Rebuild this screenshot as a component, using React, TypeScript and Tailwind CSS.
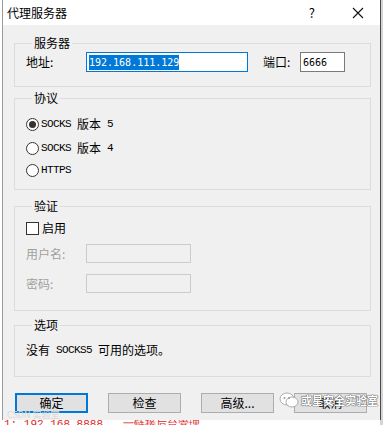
import React from "react";

const ui = "font-['Noto_Sans_CJK_SC','Microsoft_YaHei',sans-serif]";
const mono = "font-['Liberation_Mono',monospace] text-[11px] tracking-[-0.6px]";
const digits = "font-['DejaVu_Sans_Mono',monospace]";

function Radio({ checked, children }: { checked?: boolean; children: React.ReactNode }) {
  return (
    <div className="flex h-[20px] items-center">
      <div className="flex h-[13px] w-[13px] items-center justify-center rounded-full border border-[#333333] bg-white">
        {checked && <div className="h-[7px] w-[7px] rounded-full bg-[#333333]" />}
      </div>
      <div className="ml-[2px] flex items-center text-[#000000]">{children}</div>
    </div>
  );
}

function Group({ title, className, children }: { title: string; className: string; children: React.ReactNode }) {
  return (
    <fieldset className={`ml-[11px] w-[357px] border border-[#dcdcdc] pl-[11px] ${className}`}>
      <legend className={`ml-[6px] px-[2px] text-[12px] leading-[16px] text-black ${ui}`}>{title}</legend>
      {children}
    </fieldset>
  );
}

export default function App() {
  return (
    <div className={`relative h-[425px] w-[383px] overflow-hidden bg-white ${ui}`}>
      {/* what is behind the dialog */}
      <div className="absolute right-0 top-0 h-full w-[3px] bg-[#d4d4d4]" />
      <div className="absolute left-[4px] top-[418px] font-['Liberation_Mono',monospace] text-[11px] leading-[12px] text-[#d22]">
        1: 192.168.8888 &nbsp; 一链接后台管理
      </div>

      <div className="relative ml-[2px] flex h-[420px] w-[379px] flex-col border-l border-r border-l-[#9a9a9a] border-r-[#4a4a4a] bg-[#f0f0f0]">
        {/* title bar */}
        <div className="flex h-[25px] shrink-0 items-center bg-white">
          <span className="ml-[4px] text-[12px] text-black">代理服务器</span>
          <span className="ml-auto mr-[37px] text-[13px] text-black">?</span>
          <svg width="12" height="12" viewBox="0 0 12 12" className="mr-[16px]">
            <path d="M1 1 L11 11 M11 1 L1 11" stroke="#111" strokeWidth="1.1" />
          </svg>
        </div>

        <Group title="服务器" className="mt-[10px] h-[52px]">
          <div className="mt-[1px] flex h-[20px] items-center">
            <span className="w-[60px] text-[12px] text-black">地址:</span>
            <div className="flex h-[20px] w-[162px] items-center border border-[#0078d7] bg-white pl-[2px]">
              <span className={`bg-[#0078d7] text-[10px] leading-[15px] text-white ${digits}`}>192.168.111.129</span>
            </div>
            <span className="ml-[15px] w-[37px] text-[12px] text-black">端口:</span>
            <div className="flex h-[20px] w-[45px] items-center border border-[#7a7a7a] bg-white pl-[2px]">
              <span className={`text-[10px] text-black ${digits}`}>6666</span>
            </div>
          </div>
        </Group>

        <Group title="协议" className="mt-[3px] h-[100px]">
          <div className="mt-[8px]">
            <Radio checked>
              <span className={mono}>SOCKS&nbsp;</span>
              <span className="text-[12px]">版本</span>
              <span className={mono}>&nbsp;5</span>
            </Radio>
          </div>
          <div className="mt-[4px]">
            <Radio>
              <span className={mono}>SOCKS&nbsp;</span>
              <span className="text-[12px]">版本</span>
              <span className={mono}>&nbsp;4</span>
            </Radio>
          </div>
          <div className="mt-[2px]">
            <Radio>
              <span className={mono}>HTTPS</span>
            </Radio>
          </div>
        </Group>

        <Group title="验证" className="mt-[8px] h-[113px]">
          <div className="mt-[4px] flex h-[20px] items-center">
            <div className="h-[13px] w-[13px] border border-[#333333] bg-white" />
            <span className="ml-[3px] text-[12px] text-black">启用</span>
          </div>
          <div className="mt-[6px] flex h-[19px] items-center">
            <span className="w-[60px] text-[12px] text-[#a0a0a0]">用户名:</span>
            <div className="h-[19px] w-[105px] border border-[#cccccc] bg-[#f0f0f0]" />
          </div>
          <div className="mt-[11px] flex h-[19px] items-center">
            <span className="w-[60px] text-[12px] text-[#a0a0a0]">密码:</span>
            <div className="h-[19px] w-[105px] border border-[#cccccc] bg-[#f0f0f0]" />
          </div>
        </Group>

        <Group title="选项" className="mt-[6px] h-[60px]">
          <div className="mt-[7px] flex h-[20px] items-center text-black">
            <span className="text-[12px]">没有</span>
            <span className={mono}>&nbsp;SOCKS5&nbsp;</span>
            <span className="text-[12px]">可用的选项。</span>
          </div>
        </Group>

        <div className="mt-[16px] flex gap-[20px] pl-[12px]">
          <button className="h-[20px] w-[73px] border-2 border-[#0078d7] bg-[#e1e1e1] text-[12px] leading-[16px] text-black">确定</button>
          <button className="h-[20px] w-[73px] border border-[#adadad] bg-[#e1e1e1] text-[12px] leading-[18px] text-black">检查</button>
          <button className="h-[20px] w-[73px] border border-[#adadad] bg-[#e1e1e1] text-[12px] leading-[18px] text-black">高级...</button>
          <button className="h-[20px] w-[73px] border border-[#adadad] bg-[#e1e1e1] text-[12px] leading-[18px] text-black">取消</button>
        </div>

        <div className="absolute bottom-[0px] left-[4px] text-[9px] leading-[10px] text-[#d8d8d8]">CSDN 实验室</div>
      </div>

      {/* watermark over the buttons */}
      <div className="absolute left-[279px] top-[392px] flex items-center">
        <svg width="20" height="16" viewBox="0 0 20 16">
          <ellipse cx="8" cy="7" rx="7" ry="6" fill="#fff" stroke="#999" strokeWidth="0.8" />
          <ellipse cx="13" cy="10" rx="6" ry="5" fill="#fff" stroke="#999" strokeWidth="0.8" />
          <circle cx="5.5" cy="6" r="1" fill="#999" />
          <circle cx="10" cy="6" r="1" fill="#999" />
        </svg>
        <span className="ml-[2px] text-[11px] font-bold text-white [text-shadow:0_0_1px_#555,0_0_1px_#555,0_0_1px_#555]">或星安全实验室</span>
      </div>
    </div>
  );
}
